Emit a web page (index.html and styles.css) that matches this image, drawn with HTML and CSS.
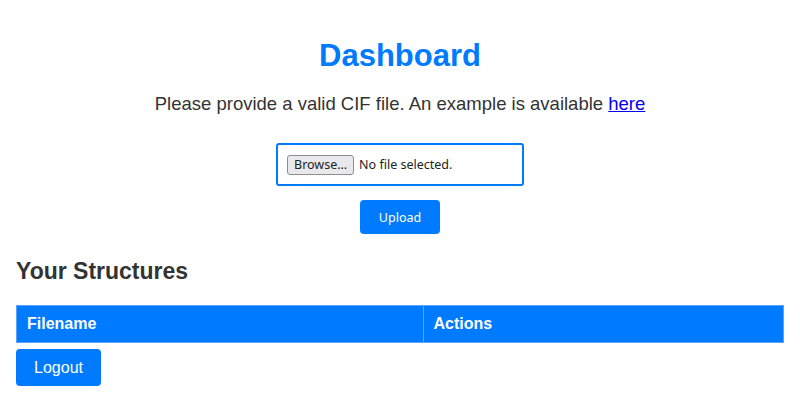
FILE: index.html
```html
<!DOCTYPE html>
<html lang="en">
<head>
<meta charset="utf-8">
<title>Dashboard</title>
<link rel="stylesheet" href="styles.css">
</head>
<body>
<div class="page">
  <h1 class="title">Dashboard</h1>
  <p class="intro">Please provide a valid CIF file. An example is available <a href="#" class="link">here</a></p>
  <form class="upload-form">
    <div class="file-box">
      <span class="browse">Browse…</span>
      <span class="file-status">No file selected.</span>
    </div>
    <button type="button" class="upload-btn">Upload</button>
  </form>
  <h2 class="section-title">Your Structures</h2>
  <table class="structures">
    <thead>
      <tr>
        <th class="col-file">Filename</th>
        <th class="col-actions">Actions</th>
      </tr>
    </thead>
    <tbody></tbody>
  </table>
  <button type="button" class="logout-btn">Logout</button>
</div>
</body>
</html>
```
FILE: styles.css
```css
html, body {
  margin: 0;
  padding: 0;
  background: #ffffff;
}
body {
  font-family: "Liberation Sans", Arial, sans-serif;
  color: #333333;
}
.page {
  padding: 16px 16px 16px 16px;
}
.title {
  margin: 21px 0 0 0;
  text-align: center;
  color: #007bff;
  font-size: 31px;
  font-weight: bold;
  line-height: 37px;
}
.intro {
  margin: 19px 0 0 0;
  text-align: center;
  font-size: 18.5px;
  line-height: 22px;
  color: #333333;
}
.link {
  color: #0000ee;
  text-decoration: underline;
}
.upload-form {
  margin-top: 28px;
  display: flex;
  flex-direction: column;
  align-items: center;
  gap: 14px;
}
.file-box {
  box-sizing: border-box;
  width: 248px;
  height: 43px;
  border: 2px solid #007bff;
  border-radius: 3px;
  display: flex;
  align-items: center;
  padding: 0 9px;
  gap: 5px;
  font-family: "Noto Sans", "DejaVu Sans", sans-serif;
  font-size: 12.5px;
  color: #222222;
}
.browse {
  box-sizing: border-box;
  height: 20px;
  padding: 0 6px;
  display: inline-flex;
  align-items: center;
  border: 1px solid #8f8f8f;
  border-radius: 3px;
  background: #e9e9ed;
  color: #222222;
}
.file-status {
  color: #222222;
}
.upload-btn {
  width: 80px;
  height: 34px;
  border: none;
  border-radius: 4px;
  background: #007bff;
  color: #ffffff;
  font-family: "Noto Sans", "DejaVu Sans", sans-serif;
  font-size: 12.5px;
  padding: 0;
  cursor: pointer;
}
.section-title {
  margin: 24px 0 0 0;
  font-size: 23px;
  line-height: 26px;
  font-weight: bold;
  color: #333333;
}
.structures {
  margin-top: 21px;
  width: 100%;
  border-collapse: collapse;
}
.structures th {
  background: #007bff;
  color: #ffffff;
  text-align: left;
  font-size: 16px;
  font-weight: bold;
  height: 37px;
  padding: 0 10px;
  border: 1px solid #58a6f7;
  box-sizing: border-box;
}
.col-file {
  width: 53%;
}
.logout-btn {
  margin-top: 6px;
  width: 85px;
  height: 37px;
  border: none;
  border-radius: 4px;
  background: #007bff;
  color: #ffffff;
  font-family: "Liberation Sans", Arial, sans-serif;
  font-size: 16px;
  padding: 0;
  cursor: pointer;
}
```
